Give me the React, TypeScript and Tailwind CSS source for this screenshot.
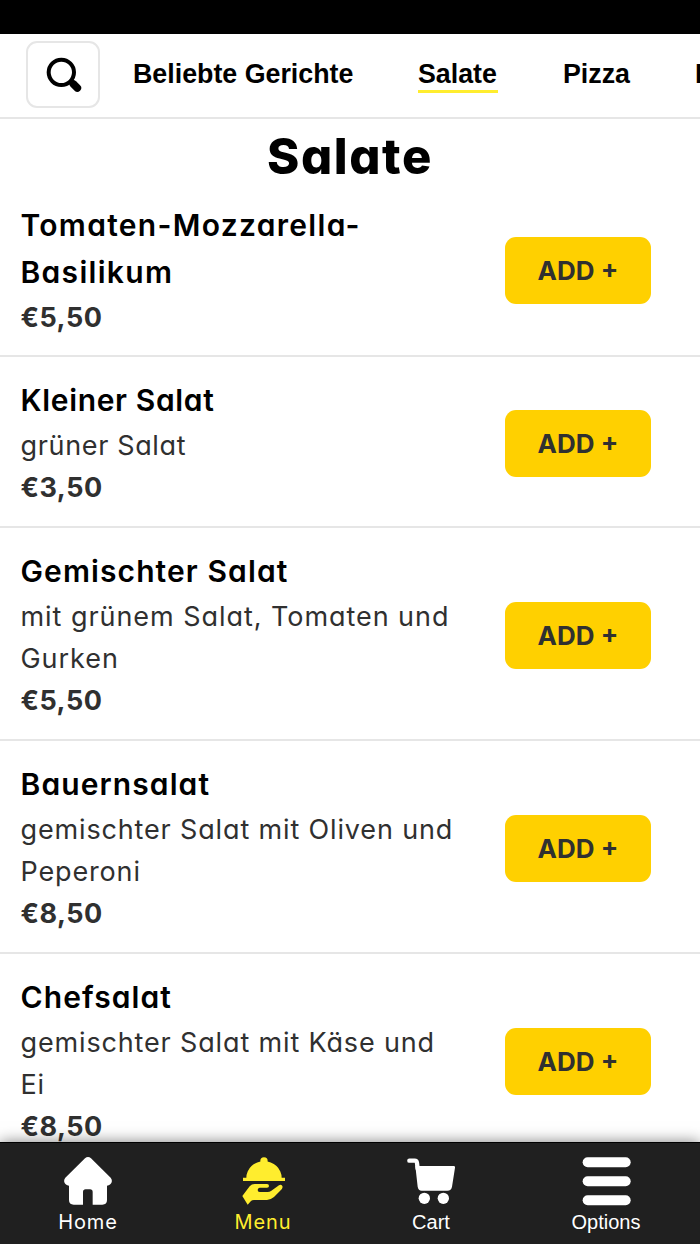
import React from 'react';

interface Dish {
  name: string;
  description?: string;
  price: string;
  nameTracking: string;
  descriptionTracking?: string;
}

const dishes: Dish[] = [
  {
    name: 'Tomaten-Mozzarella-Basilikum',
    price: '€5,50',
    nameTracking: 'tracking-[1.3px]',
  },
  {
    name: 'Kleiner Salat',
    description: 'grüner Salat',
    price: '€3,50',
    nameTracking: 'tracking-[0.65px]',
    descriptionTracking: 'tracking-[0.65px]',
  },
  {
    name: 'Gemischter Salat',
    description: 'mit grünem Salat, Tomaten und Gurken',
    price: '€5,50',
    nameTracking: 'tracking-[1.1px]',
    descriptionTracking: 'tracking-[0.95px]',
  },
  {
    name: 'Bauernsalat',
    description: 'gemischter Salat mit Oliven und Peperoni',
    price: '€8,50',
    nameTracking: 'tracking-[1.1px]',
    descriptionTracking: 'tracking-[0.85px]',
  },
  {
    name: 'Chefsalat',
    description: 'gemischter Salat mit Käse und Ei',
    price: '€8,50',
    nameTracking: 'tracking-[1.1px]',
    descriptionTracking: 'tracking-[0.85px]',
  },
];

function SearchIcon() {
  return (
    <svg viewBox="0 0 102 102" className="ml-px w-[34px] h-[34px] overflow-visible" fill="none" stroke="currentColor">
      <circle cx="43" cy="43" r="38" strokeWidth="12" />
      <path d="M68 68 L80 79" strokeWidth="14" />
      <path d="M79 78 L91 90" strokeWidth="23" strokeLinecap="round" />
    </svg>
  );
}

function HomeIcon() {
  return (
    <svg viewBox="0 0 144 144" className="size-12" fill="currentColor">
      <path d="M63 4 Q72 -4 81 4 L140 62 Q145 68 143 76 Q140 85 129 86 V129 Q129 143 115 143 H86 V105 Q86 97 78 97 H65 Q57 97 57 105 V143 H29 Q15 143 15 129 V86 Q4 85 1 76 Q-1 68 4 62 Z" />
    </svg>
  );
}

function MenuIcon() {
  return (
    <svg viewBox="-2 -1 144 144" className="size-12" fill="currentColor">
      <circle cx="73" cy="11" r="11" />
      <path d="M20 61 A53 49 0 0 1 126 61 H136 V71 H10 V61 Z" />
      <path d="M8 116 L30 87 Q36 80 45 80 H82 Q88 80 88 86 Q88 91 82 91 H60 Q54 92 54 98 Q54 104 60 104 H84 Q90 104 94 101 L118 84 Q124 80 128 86 Q130 91 126 96 L103 119 Q92 128 82 128 H43 Q37 128 34 131 L24 142 Z" />
    </svg>
  );
}

function CartIcon() {
  return (
    <svg viewBox="0 -1 144 144" className="size-12" fill="currentColor">
      <path d="M7 10 H23 Q29 10 30 17 L32 34" fill="none" stroke="currentColor" strokeWidth="13" strokeLinecap="round" />
      <path d="M25 26 H140 Q145 26 144 31 L135 88 Q133 100 121 100 H44 Q34 100 32 88 Z" />
      <circle cx="52" cy="123" r="17" />
      <circle cx="109" cy="123" r="17" />
    </svg>
  );
}

function OptionsIcon() {
  return (
    <svg viewBox="-2 -1 144 144" className="size-12 overflow-visible" fill="currentColor">
      <rect y="0" width="144" height="30" rx="15" />
      <rect y="57" width="144" height="30" rx="15" />
      <rect y="114" width="144" height="30" rx="15" />
    </svg>
  );
}

function DishRow({ dish }: { dish: Dish }) {
  return (
    <li className="flex items-center justify-between border-b-2 border-[#e6e6e6] pt-5 pb-[17px] pl-[20.5px] pr-[49px] first:pt-0 first:pb-4">
      <div className="w-[440px] text-[#303030]">
        <h3 className={`text-[30px] leading-[47px] font-semibold text-black ${dish.nameTracking}`}>{dish.name}</h3>
        <div className="pt-px text-[27px] leading-[42px]">
          {dish.description && <p className={dish.descriptionTracking}>{dish.description}</p>}
          <p className="font-bold tracking-[0.5px]">{dish.price}</p>
        </div>
      </div>
      <button className="h-[67px] w-[146px] rounded-[11px] bg-[#ffd000] text-[26px] font-bold text-[#303030]">
        ADD +
      </button>
    </li>
  );
}

export default function App() {
  return (
    <div className="flex h-[1244px] w-[700px] flex-col overflow-hidden bg-white font-['Inter',sans-serif] text-black [font-feature-settings:'cv11']">
      <div className="h-[34px] shrink-0 bg-black" />
      <header className="flex h-[85px] shrink-0 items-start overflow-hidden border-b-2 border-[#e6e6e6] pt-[7px] pl-[26px] font-['Liberation_Sans',sans-serif] text-[26.8px] font-bold whitespace-nowrap">
        <button className="flex h-[67px] w-[74px] shrink-0 items-center justify-center rounded-[11px] border-2 border-[#e6e6e6]">
          <SearchIcon />
        </button>
        <nav className="flex pt-[17px] leading-[32px]">
          <a className="ml-[33px] w-[221px]">Beliebte Gerichte</a>
          <a className="ml-[64px] h-[35px] w-[80px] border-b-[3px] border-[#ffed2e]">Salate</a>
          <a className="ml-[65px] w-[67px]">Pizza</a>
          <a className="ml-[65px]">Pasta</a>
        </nav>
      </header>

      <main className="min-h-0 flex-1 overflow-hidden">
        <h2 className="h-[83px] text-center text-[49px] leading-[76px] font-extrabold tracking-[1.6px]">Salate</h2>
        <ul>
          {dishes.map((dish) => (
            <DishRow key={dish.name} dish={dish} />
          ))}
        </ul>
      </main>

      <footer className="relative flex h-[102px] shrink-0 border-t border-black bg-[#202020] pt-[14px] text-[20px] leading-[32px] text-white shadow-[0_0_14px_rgba(0,0,0,0.5)]">
        <a className="flex w-[176px] flex-col items-center">
          <HomeIcon />
          <span className="pt-px text-[20px] tracking-[0.9px]">Home</span>
        </a>
        <a className="flex w-[174px] flex-col items-center text-[#ffed2e]">
          <MenuIcon />
          <span className="pt-px text-[20px] tracking-[0.9px]">Menu</span>
        </a>
        <a className="flex w-[162px] flex-col items-center font-['Liberation_Sans',sans-serif]">
          <CartIcon />
          <span className="pt-px">Cart</span>
        </a>
        <a className="flex w-[188px] flex-col items-center font-['Liberation_Sans',sans-serif]">
          <OptionsIcon />
          <span className="pt-px">Options</span>
        </a>
      </footer>
    </div>
  );
}
